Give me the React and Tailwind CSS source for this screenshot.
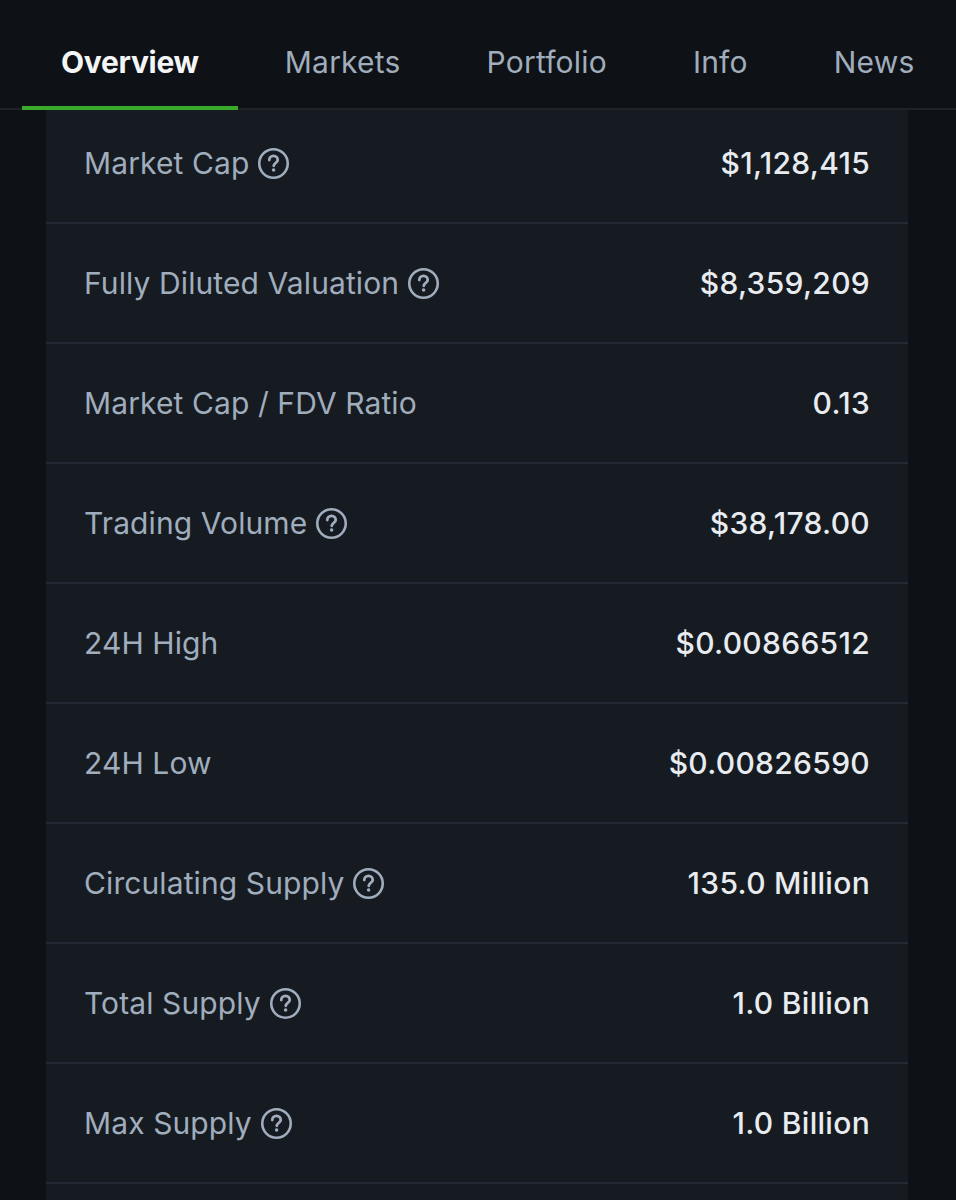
import React from "react";

const tabs = ["Overview", "Markets", "Portfolio", "Info", "News"];

const stats = [
  { label: "Market Cap", value: "$1,128,415", help: true },
  { label: "Fully Diluted Valuation", value: "$8,359,209", help: true },
  { label: "Market Cap / FDV Ratio", value: "0.13", help: false },
  { label: "Trading Volume", value: "$38,178.00", help: true },
  { label: "24H High", value: "$0.00866512", help: false },
  { label: "24H Low", value: "$0.00826590", help: false },
  { label: "Circulating Supply", value: "135.0 Million", help: true },
  { label: "Total Supply", value: "1.0 Billion", help: true },
  { label: "Max Supply", value: "1.0 Billion", help: true },
];

const HelpIcon = () => (
  <svg width="33" height="33" viewBox="0 0 32 32" fill="none" className="shrink-0">
    <circle cx="16" cy="16" r="13.8" stroke="currentColor" strokeWidth="2.5" />
    <path
      d="M11.9 12.6a4.1 4.1 0 0 1 8.2 0c0 2.4-3.6 2.9-3.9 5.6"
      stroke="currentColor"
      strokeWidth="2.7"
      strokeLinecap="round"
    />
    <circle cx="16.1" cy="22.3" r="1.7" fill="currentColor" />
  </svg>
);

export default function App() {
  return (
    <div
      className="w-[956px] h-[1200px] overflow-hidden bg-[#0e1115] flex flex-col"
      style={{ fontFamily: "Inter, 'Noto Sans', sans-serif" }}
    >
      <div className="h-[110px] shrink-0 border-b-2 border-[#1d232b] flex items-end pl-[22px] gap-2">
        {tabs.map((t, i) => (
          <div
            key={t}
            className={`px-[39px] h-full flex items-center pt-[16px] border-b-4 mb-[-2px] text-[30px] ${
              i === 0
                ? "border-[#3aaa2a] text-[#f3f5f7] font-bold tracking-[-0.3px]"
                : "border-transparent text-[#a0adbd] font-normal tracking-[0.2px]"
            }`}
          >
            {t}
          </div>
        ))}
      </div>

      <div className="ml-[46px] mr-[48px] flex-1 bg-[#161b22]">
        {stats.map((s, i) => (
          <div
            key={s.label}
            className={`flex items-center justify-between px-[38px] border-b-2 border-[#222932] ${
              i === 0 ? "h-[114px] pb-[6px]" : "h-[120px]"
            }`}
          >
            <div className="flex items-center gap-2 text-[#a0adbd] text-[30px] tracking-[0.1px]">
              <span>{s.label}</span>
              {s.help && <HelpIcon />}
            </div>
            <div className="text-[#e8ebef] text-[30px] font-medium tracking-[0.3px]">{s.value}</div>
          </div>
        ))}
      </div>
    </div>
  );
}
